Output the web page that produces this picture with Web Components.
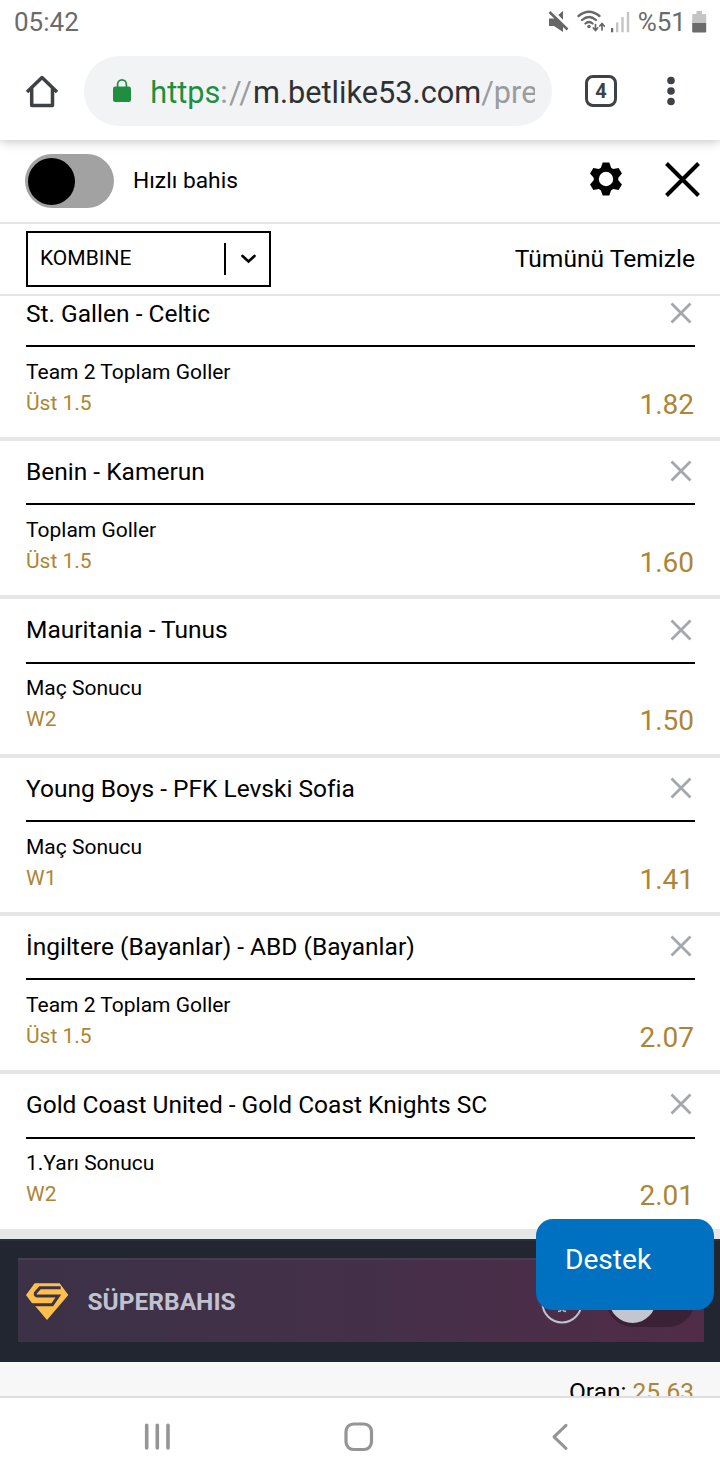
<!DOCTYPE html>
<html lang="tr">
<head>
<meta charset="utf-8">
<meta name="viewport" content="width=device-width, initial-scale=1">
<title>Kupon</title>
<style>
    body {
        margin: 0;
        width: 720px;
        height: 1480px;
        overflow: hidden;
        background: #fff;
        font-family: Roboto, sans-serif;
        color: #000;
    }
</style>
</head>
<body>
<phone-screen>
    <status-bar slot="top" time="05:42" battery="%51"></status-bar>
    <browser-bar slot="top" tabs="4">
        <span slot="scheme">https</span>
        <span slot="host">m.betlike53.com</span>
        <span slot="path">/pre</span>
    </browser-bar>
    <quick-bet>Hızlı bahis</quick-bet>
    <slip-toolbar type="KOMBINE">Tümünü Temizle</slip-toolbar>
    <bet-list>
        <bet-item market="Team 2 Toplam Goller" pick="Üst 1.5" odds="1.82">St. Gallen - Celtic</bet-item>
        <bet-item market="Toplam Goller" pick="Üst 1.5" odds="1.60">Benin - Kamerun</bet-item>
        <bet-item market="Maç Sonucu" pick="W2" odds="1.50">Mauritania - Tunus</bet-item>
        <bet-item market="Maç Sonucu" pick="W1" odds="1.41">Young Boys - PFK Levski Sofia</bet-item>
        <bet-item market="Team 2 Toplam Goller" pick="Üst 1.5" odds="2.07">İngiltere (Bayanlar) - ABD (Bayanlar)</bet-item>
        <bet-item market="1.Yarı Sonucu" pick="W2" odds="2.01">Gold Coast United - Gold Coast Knights SC</bet-item>
    </bet-list>
    <super-bet>SÜPERBAHIS</super-bet>
    <slip-total value="25.63">Oran:</slip-total>
    <nav-keys slot="bottom"></nav-keys>
    <support-button slot="overlay">Destek</support-button>
</phone-screen>

<script>
    // Attaches an open shadow root filled with the given markup
    function build(el, html) {
        el.attachShadow({ mode: "open" })
        const template = document.createElement("template")
        template.innerHTML = html
        el.shadowRoot.appendChild(template.content.cloneNode(true))
    }

    class PhoneScreen extends HTMLElement {
        constructor() {
            super()
            build(this, `
                <style>
                    :host { display: flex; flex-direction: column; width: 720px; height: 1480px; position: relative; overflow: hidden; }
                    main { flex: 1; min-height: 0; display: flex; flex-direction: column; overflow: hidden; }
                </style>
                <slot name="top"></slot>
                <main><slot></slot></main>
                <slot name="bottom"></slot>
                <slot name="overlay"></slot>
            `)
        }
    }

    class StatusBar extends HTMLElement {
        constructor() {
            super()
            build(this, `
                <style>
                    :host { display: flex; align-items: center; box-sizing: border-box; height: 44px; padding: 0 13px 0 14px; position: relative; z-index: 2; background: #fff; color: #6b6b6b; font-size: 26px; }
                    .time { flex: 1; }
                    svg { display: block; }
                    .battery { margin: 0 6px 0 7px; }
                </style>
                <span class="time">${this.getAttribute("time")}</span>
                <svg width="84" height="30" viewBox="547 6 84 30">
                    <path d="M549 17.500h5l9-7.500v21l-9-6h-5z" fill="#666"/>
                    <path d="M550 8l20 20.500" stroke="#fff" stroke-width="3.500"/>
                    <path d="M549.500 11l18 17.500" stroke="#666" stroke-width="2.600"/>
                    <g fill="none" stroke="#666" stroke-width="2.300" stroke-linecap="round">
                        <path d="M578.500 15q10.500-8.500 21 0M582 19q7-6 14 0M585.500 22.500q3.500-3 7 0"/>
                        <path d="M595.500 23.500v5.500M593.300 27l2.200 2.500 2.200-2.500M602 29v-6M599.800 25l2.200-2.500 2.200 2.500" stroke-width="1.700"/>
                    </g>
                    <circle cx="589" cy="25.500" r="1.700" fill="#666"/>
                    <path d="M611 27h2.200v4.300H611z" fill="#666"/>
                    <path d="M616 21.500h2.400v9.800H616zM621.300 16h2.400v15.300h-2.400zM626.800 11h2.400v20.300h-2.400z" fill="#c4c4c4"/>
                </svg>
                <span class="battery">${this.getAttribute("battery")}</span>
                <svg width="15" height="22" viewBox="0 0 15 22">
                    <path d="M4.500 0h5.500v3H13a1.200 1.200 0 0 1 1.200 1.200V12H.2V4.200A1.200 1.200 0 0 1 1.400 3h3.100z" fill="#c4c4c4"/>
                    <path d="M.2 12h14v8.500a1 1 0 0 1-1 1h-12a1 1 0 0 1-1-1z" fill="#6b6b6b"/>
                </svg>
            `)
        }
    }

    class BrowserBar extends HTMLElement {
        constructor() {
            super()
            build(this, `
                <style>
                    :host { display: flex; align-items: center; box-sizing: border-box; height: 96px; padding: 12px 44px 14px 24px; position: relative; z-index: 1; background: #fff; box-shadow: 0 1px 11px rgba(0, 0, 0, .26); }
                    svg { display: block; }
                    .address { display: flex; align-items: center; box-sizing: border-box; width: 468px; height: 70px; margin: 0 33px 0 24px; padding: 0 17px 0 28px; border-radius: 35px; background: #f1f3f5; }
                    .url { flex: 1; margin-left: 18.300px; padding-top: 3px; font-size: 30.700px; line-height: 44px; white-space: nowrap; overflow: hidden; color: #9a9c9e; display: flex; }
                    .scheme { color: #1f8e3e; }
                    .sep { letter-spacing: 1.100px; }
                    .host { color: #2f3033; }
                    .tabs { display: flex; align-items: center; justify-content: center; box-sizing: border-box; width: 32px; height: 32px; border: 3px solid #3e4247; border-radius: 8px; font-size: 20px; font-weight: 700; color: #3e4247; margin-right: 49px; }
                </style>
                <svg width="36" height="36" viewBox="24 73 36 36">
                    <path d="M27 92L42 77.500 57 92M31.700 88.500v17h20.800v-17" fill="none" stroke="#3e4247" stroke-width="3.500" stroke-linejoin="round"/>
                </svg>
                <div class="address">
                    <svg width="20" height="24" viewBox="0 0 20 24">
                        <rect x="1" y="7.500" width="18" height="15.500" rx="2.200" fill="#1f8e3e"/>
                        <path d="M5.600 9V5.300a4.400 4.400 0 0 1 8.800 0V9" fill="none" stroke="#1f8e3e" stroke-width="1.700"/>
                    </svg>
                    <div class="url"><span class="scheme"><slot name="scheme"></slot></span><span class="sep">://</span><span class="host"><slot name="host"></slot></span><slot name="path"></slot></div>
                </div>
                <div class="tabs">${this.getAttribute("tabs")}</div>
                <svg width="10" height="30" viewBox="0 0 10 30" fill="#3e4247">
                    <circle cx="5" cy="4.500" r="3.800"/><circle cx="5" cy="15" r="3.800"/><circle cx="5" cy="25.500" r="3.800"/>
                </svg>
            `)
        }
    }

    class QuickBet extends HTMLElement {
        constructor() {
            super()
            // the gear is one tooth rotated in 60 degree steps round a disc
            const teeth = [0, 60, 120, 180, 240, 300]
                .map(a => `<path d="M-3.300-16.500h6.600L5.600-10h-11.200z" transform="rotate(${a})"/>`).join("")
            build(this, `
                <style>
                    :host { display: flex; align-items: center; box-sizing: border-box; flex: none; height: 84px; padding: 0 20px 0 25px; border-bottom: 2px solid #e6e6e6; }
                    .switch { box-sizing: border-box; width: 89px; height: 54px; border-radius: 27px; padding: 3.500px 3px; background: #a2a2a2; }
                    .knob { width: 47px; height: 47px; border-radius: 50%; background: #000; }
                    .label { flex: 1; margin-left: 19px; padding-bottom: 2px; font-size: 22.750px; }
                    svg { display: block; margin-bottom: 4px; }
                    .gear { margin-right: 40.500px; }
                </style>
                <div class="switch"><div class="knob"></div></div>
                <span class="label"><slot></slot></span>
                <svg class="gear" width="36" height="36" viewBox="-18 -18 36 36">
                    ${teeth}<circle r="12.300"/><circle r="7.200" fill="#fff"/>
                </svg>
                <svg width="36" height="36" viewBox="0 0 36 36"><path d="M2.500 2.500l32 32M34.500 2.500L2.500 34.500" stroke="#000" stroke-width="4"/></svg>
            `)
        }
    }

    class SlipToolbar extends HTMLElement {
        constructor() {
            super()
            build(this, `
                <style>
                    :host { display: flex; align-items: center; justify-content: space-between; box-sizing: border-box; flex: none; height: 72px; padding: 0 25px 0 26px; border-bottom: 2px solid #e6e6e6; font-size: 24.600px; }
                    .select { display: flex; align-items: center; box-sizing: border-box; width: 245px; height: 56px; border: 2px solid #000; padding-left: 12px; font-size: 21px; }
                    .type { flex: 1; padding-bottom: 2px; }
                    .arrow { display: flex; align-items: center; justify-content: center; width: 43px; height: 32px; border-left: 2px solid #000; }
                    .clear { padding-bottom: 2px; }
                </style>
                <div class="select">
                    <span class="type">${this.getAttribute("type")}</span>
                    <span class="arrow"><svg width="16" height="10" viewBox="0 0 16 10"><path d="M2.500 2l6 5.500L14.500 2" fill="none" stroke="#000" stroke-width="2.600" stroke-linecap="round"/></svg></span>
                </div>
                <span class="clear"><slot></slot></span>
            `)
        }
    }

    class BetList extends HTMLElement {
        constructor() {
            super()
            // the list is scrolled, so the first bet is cut at the top
            build(this, `
                <style>
                    :host { display: flex; flex-direction: column; justify-content: flex-end; flex: none; box-sizing: border-box; height: 943px; padding-bottom: 6.400px; overflow: hidden; background: #e6e6e6; }
                </style>
                <slot></slot>
            `)
        }
    }

    class BetItem extends HTMLElement {
        constructor() {
            super()
            build(this, `
                <style>
                    :host { display: block; flex: none; box-sizing: border-box; height: 158.300px; padding: 0 25px 0 26px; background: #fff; border-bottom: 4px solid #e6e6e6; }
                    .head { display: flex; align-items: center; justify-content: space-between; box-sizing: border-box; height: 64.300px; border-bottom: 2px solid #000; font-size: 24.500px; }
                    .head span { padding-bottom: 1.600px; }
                    .head svg { display: block; margin: 0 3px 2px 0; }
                    .body { display: flex; justify-content: space-between; padding-top: 9.500px; font-size: 21px; line-height: 31px; }
                    .pick { color: #ad8535; }
                    .odds { padding: 32px 1px 0 0; font-size: 28px; color: #ad8535; }
                </style>
                <div class="head">
                    <span><slot></slot></span>
                    <svg width="22" height="22" viewBox="0 0 22 22"><path d="M1.500 1.500l19 19M20.500 1.500l-19 19" stroke="#a3a8ae" stroke-width="2.800"/></svg>
                </div>
                <div class="body">
                    <div>
                        <div>${this.getAttribute("market")}</div>
                        <div class="pick">${this.getAttribute("pick")}</div>
                    </div>
                    <div class="odds">${this.getAttribute("odds")}</div>
                </div>
            `)
        }
    }

    class SuperBet extends HTMLElement {
        constructor() {
            super()
            build(this, `
                <style>
                    :host { display: block; flex: none; box-sizing: border-box; height: 123px; padding: 17px 16px 20px 18px; background: #222631; border-top: 2px solid #273238; }
                    .panel { display: flex; align-items: center; box-sizing: border-box; height: 84px; padding: 0 9px 0 8px; background: linear-gradient(90deg, #3b3247, #452f49 55%, #512c48); border-top: 2px solid #473c52; }
                    .name { flex: 1; margin-left: 18.500px; padding-top: 1px; font-size: 24.500px; font-weight: 700; color: #c0c2cf; }
                    svg { display: block; }
                    .logo { margin-top: 2px; }
                    .info { margin-top: 3px; }
                    .switch { box-sizing: border-box; width: 89px; height: 54px; margin: 0 0 3px 23px; padding: 3.500px 3px; border-radius: 27px; background: #3b2135; }
                    .knob { width: 47px; height: 47px; border-radius: 50%; background: #c3c5d0; }
                </style>
                <div class="panel">
                    <svg class="logo" width="43" height="38" viewBox="18 23 129 114">
                        <path d="M44 24h75l26 35-64 75-33-39-13-13-17-23z" fill="#ffbf4d"/>
                        <path d="M122 37H60L46 53q-2 9 8 9h61l-18 26H30" fill="none" stroke="#3c3247" stroke-width="9"/>
                    </svg>
                    <span class="name"><slot></slot></span>
                    <svg class="info" width="42" height="42" viewBox="0 0 42 42" fill="none" stroke="#c0c2cf" stroke-width="2">
                        <circle cx="21" cy="21" r="19.500"/><path d="M21 17v10" stroke-width="3"/><path d="M17 29.500l2.500-.5 1.500-3 1.500 3 2.500.5" stroke-width="1.300"/>
                    </svg>
                    <div class="switch"><div class="knob"></div></div>
                </div>
            `)
        }
    }

    class SlipTotal extends HTMLElement {
        constructor() {
            super()
            build(this, `
                <style>
                    :host { display: flex; justify-content: flex-end; gap: 6px; flex: none; box-sizing: border-box; height: 34px; padding: 15px 26px 0; overflow: hidden; background: #f7f7f7; font-size: 24.500px; line-height: 30px; }
                    .value { color: #ad8535; }
                </style>
                <slot></slot>
                <span class="value">${this.getAttribute("value")}</span>
            `)
        }
    }

    class NavKeys extends HTMLElement {
        constructor() {
            super()
            build(this, `
                <style>
                    :host { display: flex; align-items: center; justify-content: space-between; flex: none; box-sizing: border-box; height: 84px; padding: 0 150px 5px 143px; background: #fff; border-top: 2px solid #dedede; }
                    svg { display: block; }
                    .home { margin-right: 5px; }
                </style>
                <svg width="29" height="30" viewBox="0 0 29 30"><path d="M3.700 3.300v22.700M14.300 3.300v22.700M25 3.300v22.700" stroke="#959595" stroke-width="3.600" stroke-linecap="round"/></svg>
                <svg class="home" width="30" height="30" viewBox="0 0 30 30"><rect x="2" y="2" width="25.500" height="25.500" rx="7.500" fill="none" stroke="#959595" stroke-width="3.200"/></svg>
                <svg width="20" height="30" viewBox="0 0 20 30"><path d="M16 3.300L4 14.800 16 26.300" fill="none" stroke="#959595" stroke-width="3" stroke-linecap="round" stroke-linejoin="round"/></svg>
            `)
        }
    }

    class SupportButton extends HTMLElement {
        constructor() {
            super()
            // floats over the bottom of the slip
            build(this, `
                <style>
                    :host { display: block; position: absolute; right: 6px; top: 1219px; box-sizing: border-box; width: 178px; height: 91px; padding: 23px 29px; border-radius: 17px; background: #0070c0; color: #fff; font-size: 28.100px; line-height: 36px; }
                </style>
                <slot></slot>
            `)
        }
    }

    window.customElements.define("phone-screen", PhoneScreen)
    window.customElements.define("status-bar", StatusBar)
    window.customElements.define("browser-bar", BrowserBar)
    window.customElements.define("quick-bet", QuickBet)
    window.customElements.define("slip-toolbar", SlipToolbar)
    window.customElements.define("bet-list", BetList)
    window.customElements.define("bet-item", BetItem)
    window.customElements.define("super-bet", SuperBet)
    window.customElements.define("slip-total", SlipTotal)
    window.customElements.define("nav-keys", NavKeys)
    window.customElements.define("support-button", SupportButton)
</script>
</body>
</html>
